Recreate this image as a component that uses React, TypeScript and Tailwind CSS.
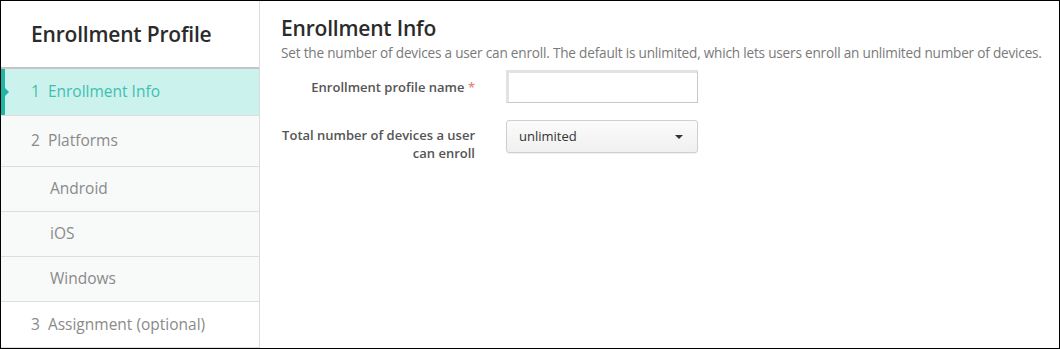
import React from "react";

const font = { fontFamily: '"Open Sans", "Noto Sans", sans-serif' };

function NavItem({ children, sub = false, bg = "bg-[#f8f9f9]", h = "h-[45px]" }: { children: React.ReactNode; sub?: boolean; bg?: string; h?: string }) {
  return (
    <div className={`flex items-center ${h} ${bg} border-b border-[#dddddd] ${sub ? "pl-[49px]" : "pl-[30px]"} text-[15.5px] text-[#8a8a8a]`}>
      {children}
    </div>
  );
}

export default function App() {
  return (
    <div style={font} className="w-[1060px] h-[349px] bg-white border border-black flex overflow-hidden">
      <aside className="w-[259px] shrink-0 border-r border-[#dcdcdc] flex flex-col">
        <div className="h-[68px] border-b-2 border-[#c4c4c4] flex items-center pl-[30px] pt-[1px]">
          <h1 className="text-[21px] font-semibold text-[#2b2b2b] tracking-[-0.2px]">Enrollment Profile</h1>
        </div>
        <div className="relative h-[47px] bg-[#ccf2ee] border-b border-[#dddddd] flex items-center pl-[30px] text-[15.5px] text-[#3fbfb0]">
          <span className="absolute left-0 top-0 bottom-0 w-[4px] bg-[#22b5a3]" />
          <span className="absolute left-[4px] top-[19px] w-0 h-0 border-y-[4px] border-y-transparent border-l-[4px] border-l-[#22b5a3]" />
          <span className="mr-[8px]">1</span>Enrollment Info
        </div>
        <NavItem h="h-[51px]"><span className="mr-[8px]">2</span>Platforms</NavItem>
        <NavItem sub>Android</NavItem>
        <NavItem sub>iOS</NavItem>
        <NavItem sub>Windows</NavItem>
        <NavItem bg="bg-white" h="h-[46px]"><span className="mr-[8px]">3</span>Assignment (optional)</NavItem>
      </aside>
      <main className="flex-1 pl-[21px] pt-[13px]">
        <h2 className="text-[21px] font-semibold text-[#2b2b2b] leading-[28px] tracking-[-0.2px]">Enrollment Info</h2>
        <p className="text-[13.6px] text-[#7a7a7a] leading-[20px] mt-[1px] tracking-[-0.2px]">
          Set the number of devices a user can enroll. The default is unlimited, which lets users enroll an unlimited number of devices.
        </p>
        <div className="mt-[7px] flex items-start">
          <div className="w-[194px] text-right text-[13px] font-semibold text-[#555555] leading-[18px] pt-[8px]">
            Enrollment profile name <span className="text-[#e8827a]">*</span>
          </div>
          <input className="ml-[31px] w-[192px] h-[33px] border border-[#c8c8c8] border-t-[3px] border-l-[3px] border-t-[#e2e2e2] border-l-[#e2e2e2] bg-white outline-none" />
        </div>
        <div className="mt-[17px] flex items-start">
          <div className="w-[194px] text-right text-[13px] font-semibold text-[#555555] leading-[18px] pt-[6px]">
            Total number of devices a user can enroll
          </div>
          <div className="ml-[31px] w-[192px] h-[33px] rounded-[3px] border border-[#cfcfcf] bg-gradient-to-b from-[#fbfbfb] to-[#f0f0f0] shadow-[0_1px_1px_rgba(0,0,0,0.06)] flex items-center justify-between pl-[12px] pr-[14px] text-[13px] text-[#333333]">
            <span>unlimited</span>
            <span className="w-0 h-0 border-x-[4px] border-x-transparent border-t-[4px] border-t-[#333333]" />
          </div>
        </div>
      </main>
    </div>
  );
}
